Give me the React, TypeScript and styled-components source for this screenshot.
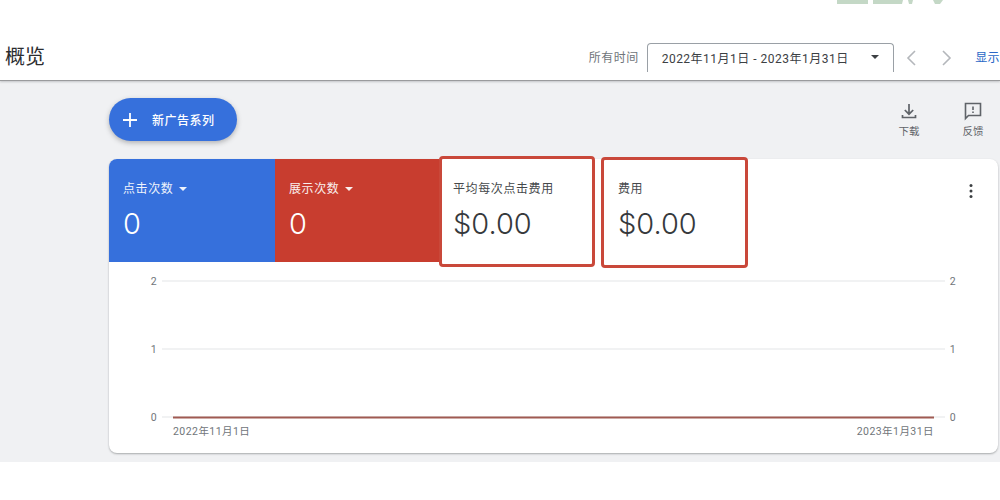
import React from "react";
import styled, { createGlobalStyle } from "styled-components";

const Global = createGlobalStyle`
  html, body { margin: 0; padding: 0; background: #fff; }
  body { font-family: Roboto, "Noto Sans CJK SC", sans-serif; color: #3c4043; overflow: hidden; }
  * { box-sizing: border-box; }
`;

const Page = styled.div`
  position: relative;
  width: 1000px;
  height: 500px;
  overflow: hidden;
  background: #fff;
`;

const Smudge = styled.svg`
  position: absolute;
  left: 836px;
  top: 0;
`;

const Header = styled.header`
  height: 81px;
  padding: 43px 0 0 5px;
  display: flex;
  align-items: flex-start;
  border-bottom: 1px solid #9a9b9d;
  box-shadow: 0 1px 2px rgba(60, 64, 67, 0.25);
  position: relative;
  background: #fff;
`;

const Title = styled.h1`
  margin: 0;
  font-size: 20px;
  line-height: 28px;
  font-weight: 400;
  color: #2b2d30;
  width: 585px;
`;

const RangeLabel = styled.span`
  font-size: 12px;
  line-height: 30px;
  color: #70757a;
  width: 58px;
  letter-spacing: 0.5px;
`;

const DateSelect = styled.div`
  width: 248px;
  height: 29px;
  border: 1px solid #9aa0a6;
  border-bottom: none;
  border-radius: 4px 4px 0 0;
  padding: 0 14px 2px;
  display: flex;
  align-items: center;
  justify-content: space-between;
  font-size: 12px;
  letter-spacing: 0.5px;
  color: #3c4043;
`;

const Caret = styled.span<{ $color?: string; $size?: number }>`
  width: 0;
  height: 0;
  border-left: ${(p) => p.$size ?? 4.5}px solid transparent;
  border-right: ${(p) => p.$size ?? 4.5}px solid transparent;
  border-top: ${(p) => p.$size ?? 4.5}px solid ${(p) => p.$color ?? "#3c4043"};
`;

const Pager = styled.div`
  display: flex;
  align-items: center;
  gap: 20px;
  height: 29px;
  margin-left: 9px;
`;

const ShowLink = styled.span`
  font-size: 12px;
  line-height: 30px;
  color: #2a67c6;
  margin-left: 20px;
  white-space: nowrap;
  letter-spacing: 0.4px;
`;

const Content = styled.main`
  height: 381px;
  background: #f0f1f3;
  padding: 17px 2px 0 109px;
`;

const Toolbar = styled.div`
  display: flex;
  align-items: flex-start;
  justify-content: space-between;
  height: 61px;
`;

const NewButton = styled.button`
  width: 128px;
  height: 43px;
  border: none;
  border-radius: 22px;
  background: #3670dc;
  box-shadow: 0 2px 5px rgba(60, 64, 67, 0.35);
  color: #fff;
  display: flex;
  align-items: center;
  gap: 14px;
  padding: 0 0 0 13px;
  font: 500 12px Roboto, "Noto Sans CJK SC", sans-serif;
  letter-spacing: 0.5px;
`;

const Actions = styled.div`
  display: flex;
  gap: 40px;
  margin-right: 13px;
  padding-top: 3px;
`;

const Action = styled.div`
  width: 24px;
  display: flex;
  flex-direction: column;
  align-items: center;
  gap: 4px;
  font-size: 10.5px;
  line-height: 14px;
  color: #5f6368;
  white-space: nowrap;
`;

const Card = styled.section`
  width: 889px;
  height: 294px;
  background: #fff;
  border-radius: 8px;
  box-shadow: 0 1px 2px rgba(60, 64, 67, 0.4);
`;

const Tiles = styled.div`
  display: flex;
  height: 103px;
  position: relative;
`;

const Tile = styled.div<{ $bg?: string; $w: number; $light?: boolean; $left?: boolean }>`
  width: ${(p) => p.$w}px;
  background: ${(p) => p.$bg ?? "#fff"};
  color: ${(p) => (p.$light ? "#fff" : "#36393c")};
  padding: 21px 0 0 14px;
  position: relative;
  border-top-left-radius: ${(p) => (p.$left ? 8 : 0)}px;
`;

const TileLabel = styled.div`
  display: flex;
  align-items: center;
  gap: 6px;
  font-size: 12px;
  line-height: 18px;
  letter-spacing: 0.6px;
  opacity: 0.92;
`;

const TileValue = styled.div`
  font-family: Inter, Roboto, sans-serif;
  font-size: 29px;
  line-height: 36px;
  margin-top: 8px;
  font-weight: 300;
`;

const Highlight = styled.div<{ $l: number; $t: number; $w: number; $h: number }>`
  position: absolute;
  left: ${(p) => p.$l}px;
  top: ${(p) => p.$t}px;
  width: ${(p) => p.$w}px;
  height: ${(p) => p.$h}px;
  border: 3px solid #c9483a;
  border-radius: 4px;
  pointer-events: none;
`;

const MoreButton = styled.div`
  margin-left: auto;
  width: 56px;
  padding-top: 24px;
  padding-left: 27px;
`;

const Chart = styled.svg`
  display: block;
`;

const AxisText = styled.text`
  font-family: Roboto, "Noto Sans CJK SC", sans-serif;
  font-size: 10.5px;
  fill: #70757a;
  letter-spacing: 0.45px;
`;

const GridLine = styled.line`
  stroke: #e3e5e7;
  stroke-width: 1;
`;

const ChevronIcon = ({ d }: { d: string }) => (
  <svg width="16" height="18" viewBox="0 0 16 18" fill="none" stroke="#b4b7bb" strokeWidth="1.6">
    <path d={d} />
  </svg>
);

const levels = [
  { v: "2", y: 122 },
  { v: "1", y: 190 },
  { v: "0", y: 258 },
];

export default function App() {
  return (
    <Page>
      <Global />
      <Header>
        <Title>概览</Title>
        <RangeLabel>所有时间</RangeLabel>
        <DateSelect>
          <span>2022年11月1日 - 2023年1月31日</span>
          <Caret />
        </DateSelect>
        <Pager>
          <ChevronIcon d="M12 2 L5 9 L12 16" />
          <ChevronIcon d="M4 2 L11 9 L4 16" />
        </Pager>
        <ShowLink>显示</ShowLink>
      </Header>
      <Smudge width="110" height="5" viewBox="0 0 110 5">
        <path d="M1 0h31v4H1zM37 0h30l-1 4H37zM72 0h5l-1 4h-3zM97 0h10l-3 4h-5z" fill="#c4d8c6" />
      </Smudge>
      <Content>
        <Toolbar>
          <NewButton>
            <svg width="16" height="16" viewBox="0 0 16 16" stroke="#fff" strokeWidth="1.8">
              <path d="M8 1v14M1 8h14" />
            </svg>
            <span>新广告系列</span>
          </NewButton>
          <Actions>
            <Action>
              <svg width="20" height="20" viewBox="0 0 20 20" fill="none" stroke="#5f6368" strokeWidth="1.7">
                <path d="M10 3v10M5.8 9l4.2 4.2L14.2 9M3.5 14v2.5h13V14" />
              </svg>
              <span>下载</span>
            </Action>
            <Action>
              <svg width="20" height="20" viewBox="0 0 20 20" fill="none" stroke="#5f6368" strokeWidth="1.6">
                <path d="M2.5 2.5h15v12H5.5l-3 3z" />
                <path d="M10 5.5v3.5M10 10.5v1.5" />
              </svg>
              <span>反馈</span>
            </Action>
          </Actions>
        </Toolbar>
        <Card>
          <Tiles>
            <Tile $bg="#3670dc" $w={166} $light $left>
              <TileLabel>
                点击次数 <Caret $color="#fff" $size={4} />
              </TileLabel>
              <TileValue>0</TileValue>
            </Tile>
            <Tile $bg="#c83d2f" $w={164} $light>
              <TileLabel>
                展示次数 <Caret $color="#fff" $size={4} />
              </TileLabel>
              <TileValue>0</TileValue>
            </Tile>
            <Tile $w={165}>
              <TileLabel>平均每次点击费用</TileLabel>
              <TileValue>$0.00</TileValue>
              <Highlight $l={0} $t={-3} $w={156} $h={111} />
            </Tile>
            <Tile $w={165}>
              <TileLabel>费用</TileLabel>
              <TileValue>$0.00</TileValue>
              <Highlight $l={-3} $t={-2} $w={147} $h={111} />
            </Tile>
            <MoreButton>
              <svg width="4" height="16" viewBox="0 0 4 16" fill="#3c4043">
                <circle cx="2" cy="2.5" r="1.5" />
                <circle cx="2" cy="8" r="1.5" />
                <circle cx="2" cy="13.5" r="1.5" />
              </svg>
            </MoreButton>
          </Tiles>
          <Chart width="889" height="191" viewBox="0 103 889 191">
            {levels.map((l) => (
              <g key={l.v}>
                <GridLine x1="53" x2="836" y1={l.y} y2={l.y} />
                <AxisText x="45" y={l.y + 4} textAnchor="middle">{l.v}</AxisText>
                <AxisText x="844" y={l.y + 4} textAnchor="middle">{l.v}</AxisText>
              </g>
            ))}
            <line x1="64" x2="825" y1="258.5" y2="258.5" stroke="#a05a52" strokeWidth="2" />
            <AxisText x="64" y="276">2022年11月1日</AxisText>
            <AxisText x="825" y="276" textAnchor="end">2023年1月31日</AxisText>
          </Chart>
        </Card>
      </Content>
    </Page>
  );
}
